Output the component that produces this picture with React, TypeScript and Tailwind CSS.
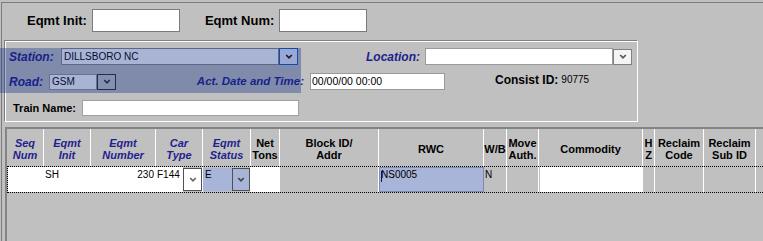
import React from "react";

const NAVY = "text-[#1f1f8f]";

function Chev({ color = "#111" }: { color?: string }) {
  return (
    <svg width="8" height="5" viewBox="0 0 8 5">
      <path d="M1.2 1 L4 3.8 L6.8 1" stroke={color} strokeWidth="1.7" fill="none" />
    </svg>
  );
}

type Col = { w: string; label: React.ReactNode; blue?: boolean; right?: boolean };

const cols: Col[] = [
  { w: "w-[37px]", label: <>Seq<br />Num</>, blue: true },
  { w: "w-[47px]", label: <>Eqmt<br />Init</>, blue: true },
  { w: "w-[65px]", label: <>Eqmt<br />Number</>, blue: true },
  { w: "w-[47px]", label: <>Car<br />Type</>, blue: true },
  { w: "w-[48px]", label: <>Eqmt<br />Status</>, blue: true },
  { w: "w-[29px]", label: <>Net<br />Tons</> },
  { w: "w-[99px]", label: <>Block ID/<br />Addr</> },
  { w: "w-[105px]", label: <>RWC</> },
  { w: "w-[23px]", label: <>W/B</> },
  { w: "w-[32px]", label: <>Move<br />Auth.</> },
  { w: "w-[104px]", label: <>Commodity</> },
  { w: "w-[12px]", label: <>H<br />Z</> },
  { w: "w-[49px]", label: <>Reclaim<br />Code</> },
  { w: "w-[52px]", label: <>Reclaim<br />Sub ID</> },
];

export default function App() {
  return (
    <div
      className="relative w-[763px] h-[241px] bg-[#c0c0c0] overflow-hidden text-black"
      style={{ fontFamily: '"Liberation Sans", Arial, sans-serif' }}
    >
      <div className="mt-[2px] ml-[1px] h-[239px] border-t border-l border-[#7c7c7c]">
        {/* Top row */}
        <div className="flex items-center h-[37px] pl-[25px] pb-[2px]">
          <span className="text-[13px] font-bold">Eqmt Init:</span>
          <div className="ml-[5px] w-[88px] h-[23px] bg-white border border-[#7a7a7a]" />
          <span className="ml-[25px] text-[13px] font-bold">Eqmt Num:</span>
          <div className="ml-[5px] w-[88px] h-[23px] bg-white border border-[#7a7a7a]" />
        </div>

        {/* Group box */}
        <div className="ml-[2px] w-[634px] h-[82px] border-t border-l border-[#808080] border-r border-b border-r-white border-b-white">
          <div className="h-full border-t border-l border-white">
            {/* Row 1 */}
            <div className="mt-[6px] h-[17px] flex items-center pl-[3px]">
              <span className={`w-[52px] text-[12px] font-bold italic ${NAVY}`}>Station:</span>
              <div className="w-[218px] h-[17px] bg-white border border-[#8a8a8a] text-[10px] leading-[15px] pl-[2px]">
                DILLSBORO NC
              </div>
              <div className="w-[19px] h-[17px] bg-[#e8f0ff] border border-[#1a5fc4] flex items-center justify-center">
                <Chev />
              </div>
              <span className={`ml-[68px] w-[59px] text-[12px] font-bold italic ${NAVY}`}>Location:</span>
              <div className="w-[188px] h-[17px] bg-white border border-[#9a9a9a]" />
              <div className="w-[19px] h-[16px] bg-[#f4f4f4] border border-[#808080] flex items-center justify-center">
                <Chev color="#555" />
              </div>
            </div>
            {/* Row 2 */}
            <div className="mt-[8px] h-[17px] flex items-center pl-[3px]">
              <span className={`w-[40px] text-[12px] font-bold italic ${NAVY}`}>Road:</span>
              <div className="w-[48px] h-[16px] bg-white border border-[#9a9a9a] text-[10px] leading-[13px] pl-[2px]">
                GSM
              </div>
              <div className="w-[19px] h-[16px] bg-[#c8c8c8] border border-[#303030] flex items-center justify-center">
                <Chev color="#333" />
              </div>
              <span className={`w-[188px] text-right text-[11.5px] font-bold italic ${NAVY}`}>
                Act. Date and Time:
              </span>
              <div className="ml-[6px] w-[135px] h-[17px] bg-white border border-[#9a9a9a] text-[10.5px] leading-[15px] pl-[1px]">
                00/00/00 00:00
              </div>
              <span className="ml-[50px] text-[12px] font-bold -mt-[3px]">Consist ID:</span>
              <span className="ml-[3px] text-[10px] -mt-[5px]">90775</span>
            </div>
            {/* Row 3 */}
            <div className="mt-[10px] h-[16px] flex items-center pl-[7px]">
              <span className="w-[69px] text-[11px] font-bold">Train Name:</span>
              <div className="w-[217px] h-[16px] bg-white border border-[#a0a0a0]" />
            </div>
          </div>
        </div>

        {/* Table */}
        <div className="mt-[5px] ml-[3px] h-[120px] border-t-2 border-l-2 border-[#848484]">
          {/* header */}
          <div className="flex h-[37px]">
            {cols.map((c, i) => (
              <div
                key={i}
                className={`${c.w} shrink-0 h-full border-r border-white flex items-center justify-center text-center text-[11px] leading-[12.5px] font-bold pt-[3px] ${
                  c.blue ? `italic ${NAVY}` : "text-black"
                }`}
              >
                <div>{c.label}</div>
              </div>
            ))}
            <div className="flex-1" />
          </div>
          {/* data row */}
          <div className="flex h-[27px] border-t border-b border-l border-dotted border-black text-[10px] leading-[12px]">
            <div className="w-[36px] shrink-0 bg-white border-r border-white" />
            <div className="w-[47px] shrink-0 bg-white border-r border-white pl-[1px] pt-[2px]">SH</div>
            <div className="w-[65px] shrink-0 bg-white border-r border-white text-right pr-[1px] pt-[2px]">230</div>
            <div className="w-[47px] shrink-0 border-r border-white flex">
              <div className="w-[27px] bg-white pl-[1px] pt-[2px]">F144</div>
              <div className="w-[19px] my-[1px] bg-white border border-[#505050] flex items-center justify-center">
                <Chev color="#666" />
              </div>
            </div>
            <div className="w-[48px] shrink-0 border-r border-white flex py-[1px]">
              <div className="w-[29px] bg-[#a8b4d8] pl-[2px] pt-[1px]">E</div>
              <div className="w-[18px] bg-[#a8b4d8] border border-[#505050] flex items-center justify-center">
                <Chev color="#444" />
              </div>
            </div>
            <div className="w-[29px] shrink-0 bg-white border-r border-white" />
            <div className="w-[99px] shrink-0 border-r border-white" />
            <div className="relative w-[105px] shrink-0 bg-[#a8b4d8] border border-[#7d8bb4] pl-[1px] pt-[1px]">
              <span className="absolute left-[1px] top-[3px] w-[1px] h-[11px] bg-[#10104a]" />
              NS0005
            </div>
            <div className="w-[23px] shrink-0 border-r border-white pl-[1px] pt-[2px]">N</div>
            <div className="w-[32px] shrink-0 border-r border-white" />
            <div className="w-[104px] shrink-0 border-r border-white pl-[1px]">
              <div className="h-full bg-white" />
            </div>
            <div className="w-[12px] shrink-0 border-r border-white" />
            <div className="w-[49px] shrink-0 border-r border-white" />
            <div className="w-[52px] shrink-0 border-r border-white" />
            <div className="flex-1" />
          </div>
        </div>
      </div>

      {/* selection overlay */}
      <div className="absolute left-0 top-[48px] w-[301px] h-[45px] bg-[rgba(8,36,128,0.35)] pointer-events-none" />
    </div>
  );
}
